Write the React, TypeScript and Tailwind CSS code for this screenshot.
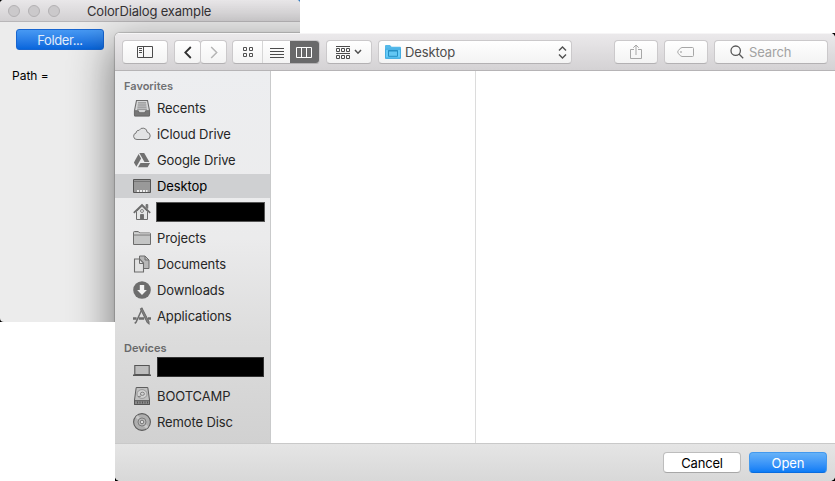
import type { ReactNode } from "react";

const button =
  "flex h-6 shrink-0 items-center justify-center rounded-[4px] border border-[#cbc9cb] border-b-[#b3b1b3] bg-gradient-to-b from-white to-[#f3f3f3]";

function Icon({ children, w = 18, h = 18 }: { children: ReactNode; w?: number; h?: number }) {
  return (
    <svg width={w} height={h} viewBox={`0 0 ${w} ${h}`} fill="none" stroke="#6c6c6c" strokeWidth="1.1" className="shrink-0">
      {children}
    </svg>
  );
}

const icons: Record<string, ReactNode> = {
  recents: (
    <Icon>
      <path d="M3.5 1.5h11l2 10v4.5q0 .8-.8.8H2.3q-.8 0-.8-.8v-4.5z" fill="#d5d6d7" />
      <path d="M1.5 11.8h3.6l1.1 2h5.6l1.1-2h3.6v4.4q0 .7-.7.7H2.2q-.7 0-.7-.7z" fill="#777" />
      <path d="M5 3.9h8M4.7 6h8.6M4.4 8.1h9.2M4.1 10.2h9.8" strokeWidth=".8" />
    </Icon>
  ),
  cloud: (
    <Icon>
      <path d="M4 14.5A3.3 3.3 0 0 1 3.1 8a2.5 2.5 0 0 1 3-2.6 4.3 4.3 0 0 1 8.1 1.8 3.7 3.7 0 0 1-.2 7.3z" fill="#e2e3e4" stroke="#777" strokeWidth="1" />
    </Icon>
  ),
  google: (
    <Icon>
      <g fill="#707070" stroke="none">
        <path d="M6.3 2h4.9l5.2 9h-4.9z" />
        <path d="M5.6 3.1L8.1 7.5 3.4 15.8.9 11.6z" />
        <path d="M7.5 12h9.6l-2.5 4.3H5z" />
      </g>
    </Icon>
  ),
  desktop: (
    <Icon>
      <path d="M.5 2.5h17v13H.5z" fill="#999" stroke="#555" strokeWidth="1" />
      <path d="M1 4.5h16" stroke="#777" strokeWidth="1" />
      <path d="M4 13h2v2H4zm3 0h2v2H7zm3 0h2v2h-2zm3 0h1.5v2H13z" fill="#eee" stroke="none" />
    </Icon>
  ),
  home: (
    <Icon>
      <path d="M3.5 8.5V16.5h11V8.5L9 3.3z" fill="#e4e5e5" strokeWidth="1" />
      <path d="M.8 9.8L9 1.9l8.2 7.9" strokeWidth="1.7" />
      <path d="M13 1.5h1.8v4L13 4z" fill="#777" strokeWidth=".8" />
      <path d="M7.5 11.5h3v5h-3z" fill="#6b6b6b" strokeWidth=".9" />
      <circle cx="9" cy="8" r="1.5" strokeWidth=".8" />
    </Icon>
  ),
  folder: (
    <Icon>
      <path d="M.5 15.5v-12q0-1 1-1h3.8l1.5 1.5h9.7q1 0 1 1v10.5z" fill="#c4c5c5" strokeWidth="1" />
      <path d="M1 5h16" stroke="#e1e1e1" strokeWidth="1" />
      <path d="M.5 6h17" stroke="#777" strokeWidth="1" />
    </Icon>
  ),
  documents: (
    <Icon>
      <path d="M6.5 1h5.5l4 4v8.5h-9.5z" fill="#b8b8b8" strokeWidth="1" />
      <path d="M12 1v4h4" strokeWidth="1" />
      <path d="M1.5 4h5.2l3.8 4v9h-9z" fill="#e2e2e2" />
      <path d="M6.5 4v4.5h4" strokeWidth="1" />
    </Icon>
  ),
  downloads: (
    <Icon>
      <circle cx="9" cy="9" r="8.8" fill="#6d6d6d" stroke="none" />
      <path d="M6.8 4h4.4v5h2.7L9 14.1 4.1 9h2.7z" fill="#f3f3f3" stroke="none" />
    </Icon>
  ),
  applications: (
    <Icon>
      <path d="M9.3 1.5L3 15.2l-1.3 1.2" strokeWidth="1.5" />
      <path d="M7.5 2l1.4-.9L16 14.8v2l-1.8-1.3z" fill="#888" strokeWidth="1.1" />
      <path d="M0 11.5h3.6m2.2 0h5.4m3.8 0h3" strokeWidth="2.4" />
    </Icon>
  ),
  laptop: (
    <Icon>
      <path d="M1.8 4.5h14.4v9H1.8z" fill="#bdbdbd" stroke="#555" />
      <path d="M0 14.3h18" stroke="#555" strokeWidth="1.6" />
    </Icon>
  ),
  drive: (
    <Icon>
      <path d="M3.2.5h11.6l1.7 12.5v4.5h-15V13z" fill="#c0c0c0" stroke="#5d5d5d" strokeWidth="1" />
      <path d="M1.5 13.7h15v3.8h-15z" fill="#8a8a8a" stroke="#555" strokeWidth="1" />
      <ellipse cx="9" cy="7" rx="5" ry="4.4" fill="#d2d2d2" stroke="#8c8c8c" strokeWidth=".8" />
      <ellipse cx="9.4" cy="6.8" rx="2" ry="1.6" stroke="#777" strokeWidth=".9" />
      <path d="M5 9.7l3-.6" stroke="#777" strokeWidth=".9" />
      <path d="M4 15.6h1m1.5 0h1m1.5 0h1m1.5 0h1m1.5 0h1" stroke="#555" strokeWidth="2" />
    </Icon>
  ),
  disc: (
    <Icon>
      <circle cx="9" cy="9" r="8.4" fill="#aeaeae" stroke="#5b5b5b" />
      <path d="M9 9L3.6 3.2M9 9l5.4 5.8" stroke="#c9c9c9" strokeWidth="3" />
      <circle cx="9" cy="9" r="4" fill="#bcbcbc" stroke="#757575" strokeWidth=".9" />
      <circle cx="9" cy="9" r="1.8" fill="#ddd" stroke="#6c6c6c" strokeWidth=".9" />
    </Icon>
  ),
};

function Row({ icon, label, selected = false }: { icon: string; label: ReactNode; selected?: boolean }) {
  return (
    <div className={`flex h-6 items-center gap-1.5 pl-[18px] ${selected ? "bg-[#cfd0d2] text-black" : ""}`}>
      {icons[icon]}
      <span className="tracking-[-0.11px] whitespace-nowrap">{label}</span>
    </div>
  );
}

function Toolbar() {
  return (
    <div className="flex h-[38px] shrink-0 items-center border-t border-b border-t-[#f6f5f6] border-b-[#b6b4b6] bg-gradient-to-b from-[#ebe9eb] to-[#d4d2d4] px-[7px]">
      <div className={`${button} w-[46px]`}>
        <svg width="16" height="12" fill="none" stroke="#4b4b4b">
          <path d="M.5.5h15v11H.5zM6.5.5v11M2 2.5h3M2 4.5h3M2 6.5h3" />
        </svg>
      </div>
      <div className={`${button} ml-1.5 w-[27px]`}>
        <svg width="8" height="13" fill="none" stroke="#303030" strokeWidth="1.8"><path d="M6.8 1L1.3 6.5l5.5 5.5" /></svg>
      </div>
      <div className={`${button} -ml-px w-[27px]`}>
        <svg width="8" height="13" fill="none" stroke="#b5b5b5" strokeWidth="1.5"><path d="M1.2 1l5.5 5.5L1.2 12" /></svg>
      </div>
      <div className={`${button} ml-[5px] w-[88px] !justify-start overflow-hidden`}>
        <div className="flex h-full w-[30px] shrink-0 items-center justify-center border-r border-[#d6d6d6] pl-px">
          <svg width="10" height="10" fill="none" stroke="#505050">
            <path d="M.5.5h3v3h-3zM6.5.5h3v3h-3zM.5 6.5h3v3h-3zM6.5 6.5h3v3h-3z" />
          </svg>
        </div>
        <div className="flex h-full w-[27px] shrink-0 items-center justify-center">
          <svg width="14" height="11" stroke="#4b4b4b"><path d="M0 1.5h14M0 4.5h14M0 7.5h14M0 10.5h14" /></svg>
        </div>
        <div className="flex h-6 w-[30px] shrink-0 items-center justify-center bg-[#69696a] pr-[2px]">
          <svg width="16" height="11" fill="none" stroke="white"><path d="M.5.5h15v10H.5zM5.5.5v10M10.5.5v10" /></svg>
        </div>
      </div>
      <div className={`${button} ml-[6px] w-[46px] gap-1`}>
        <svg width="14" height="13" fill="none" stroke="#4b4b4b">
          <path d="M0 .5h14M.5 2.5h3v3h-3zM5.5 2.5h3v3h-3zM10.5 2.5h3v3h-3zM0 7.5h14M.5 9.5h3v3h-3zM5.5 9.5h3v3h-3zM10.5 9.5h3v3h-3z" />
        </svg>
        <svg width="8" height="6" fill="none" stroke="#505050" strokeWidth="1.5"><path d="M1 1l3 3.2L7 1" /></svg>
      </div>
      <div className={`${button} ml-[6px] w-[194px] !justify-start pl-[6px] pr-1`}>
        <svg width="16" height="14">
          <path d="M0 1q0-1 1-1h4l1.5 1.7H15q1 0 1 1V13q0 1-1 1H1q-1 0-1-1z" fill="#55b9e9" />
          <path d="M.5 4.2h15V13H.5z" fill="#66cbf8" stroke="#43ace0" />
          <path d="M3.5 5.5h9v5.8h-9z" fill="#62c7f4" stroke="#258fc4" />
          <path d="M3 6h10" stroke="#258fc4" />
        </svg>
        <span className="ml-1 tracking-[-0.1px] text-[#4c4c4c]">Desktop</span>
        <svg width="9" height="13" className="ml-auto" fill="none" stroke="#505050" strokeWidth="1.4"><path d="M1 4.5L4.5 1 8 4.5M1 8.5L4.5 12 8 8.5" /></svg>
      </div>
      <div className={`${button} ml-auto w-11`}>
        <svg width="12" height="16" fill="none" stroke="#a7a7a7"><path d="M4 5.5H.5v9h11v-9H8M6 11V1M3.3 3.7L6 1l2.7 2.7" /></svg>
      </div>
      <div className={`${button} ml-1.5 w-11`}>
        <svg width="18" height="12" fill="none" stroke="#a7a7a7"><path d="M5 1.5h10.5q1 0 1 1v7q0 1-1 1H5Q3.5 10.5 1.2 7.3q-1-1.3 0-2.6Q3.5 1.5 5 1.5z" /><circle cx="4" cy="6" r=".5" /></svg>
      </div>
      <div className={`${button} ml-1.5 w-[114px] !justify-start gap-[5px] pl-[15px] text-[#a2a2a2]`}>
        <svg width="14" height="14" fill="none" stroke="#585858" strokeWidth="1.3"><circle cx="5.7" cy="5.7" r="4.7" /><path d="M9 9l4.2 4.2" /></svg>
        <span className="tracking-[-0.15px]">Search</span>
      </div>
    </div>
  );
}

export default function App() {
  return (
    <main className="relative h-[481px] w-[835px] overflow-hidden bg-white font-['Inter','Liberation_Sans',sans-serif] text-[13px] leading-4 text-[#262626]">
      <section className="absolute top-0 left-0 h-[322px] w-[300px] overflow-hidden bg-[linear-gradient(to_right,black_50%,#3b7fc4_50%)]">
        <div className="flex h-full flex-col overflow-hidden rounded-[4px] bg-[#ececec]">
          <header className="flex h-[22px] shrink-0 items-center border-b border-[#b8b6b8] bg-gradient-to-b from-[#e9e7e9] to-[#d2d0d2]">
            <div className="flex gap-2 pl-2">
              <i className="size-3 rounded-full border border-[#b3b1b3] bg-[#cbc9cb]" />
              <i className="size-3 rounded-full border border-[#b3b1b3] bg-[#cbc9cb]" />
              <i className="size-3 rounded-full border border-[#b3b1b3] bg-[#cbc9cb]" />
            </div>
            <h1 className="ml-[27px] tracking-[-0.17px] whitespace-nowrap text-[#353235]">ColorDialog example</h1>
          </header>
          <button className="mt-[7px] ml-4 flex h-[21px] w-[88px] items-center justify-center rounded-[3px] border border-[#1765d0] bg-gradient-to-b from-[#4799f3] to-[#0666dc] tracking-[-0.4px] text-[#e1edfb]">Folder...</button>
          <p className="mt-[18px] ml-3 text-[12px] text-black">Path =</p>
        </div>
        <div className="absolute top-[33px] left-[115px] h-[448px] w-[720px] rounded-t-[5px] shadow-[0_14px_42px_4px_rgba(0,0,0,0.46),0_0_1px_1px_rgba(0,0,0,0.18)]" />
      </section>

      <section className="absolute top-[33px] left-[115px] h-[448px] w-[720px] bg-[linear-gradient(to_right,transparent_50%,black_50%),linear-gradient(to_bottom,transparent_50%,black_50%)]">
        <div className="flex h-full flex-col overflow-hidden rounded-[5px] bg-white">
          <Toolbar />
          <div className="flex min-h-0 flex-1">
            <aside className="w-[156px] shrink-0 border-r border-[#c9cacb] bg-[linear-gradient(to_bottom,#edeef0_0%,#ebebec_45%,#dcdcdc_72%,#d1d1d1_100%)]">
              <h2 className="mt-[7px] pl-[9px] text-[11px] leading-4 font-semibold text-[#707173]">Favorites</h2>
              <nav className="mt-[2px] flex flex-col gap-0.5">
                <Row icon="recents" label="Recents" />
                <Row icon="cloud" label="iCloud Drive" />
                <Row icon="google" label="Google Drive" />
                <Row icon="desktop" label="Desktop" selected />
                <Row icon="home" label={<i className="-ml-px block h-5 w-[109px] border border-[#555] bg-black" />} />
                <Row icon="folder" label="Projects" />
                <Row icon="documents" label="Documents" />
                <Row icon="downloads" label="Downloads" />
                <Row icon="applications" label="Applications" />
              </nav>
              <h2 className="mt-3 pl-[9px] text-[11px] leading-4 font-semibold text-[#68696a]">Devices</h2>
              <nav className="mt-[2px] flex flex-col gap-0.5">
                <Row icon="laptop" label={<i className="-mt-[6px] block h-5 w-[107px] border border-[#333] bg-black" />} />
                <Row icon="drive" label="BOOTCAMP" />
                <Row icon="disc" label="Remote Disc" />
              </nav>
            </aside>
            <div className="w-[205px] border-r border-[#dcdcdc]" />
            <div className="flex-1" />
          </div>
          <footer className="flex h-[38px] shrink-0 items-center justify-end gap-2 border-t border-[#c9c9c9] bg-gradient-to-b from-[#e5e5e5] to-[#d8d8d8] pr-2">
            <button className="h-[21px] w-[78px] rounded-[4px] border border-[#bdbdbd] border-b-[#a7a7a7] bg-white text-[13px] leading-[18px] tracking-[-0.2px] text-black">Cancel</button>
            <button className="h-[21px] w-[78px] rounded-[4px] border border-[#4399ee] border-b-[#086cdf] bg-gradient-to-b from-[#66b2f8] to-[#087cf6] text-[13px] leading-[18px] tracking-[-0.1px] text-white">Open</button>
          </footer>
        </div>
      </section>
    </main>
  );
}
